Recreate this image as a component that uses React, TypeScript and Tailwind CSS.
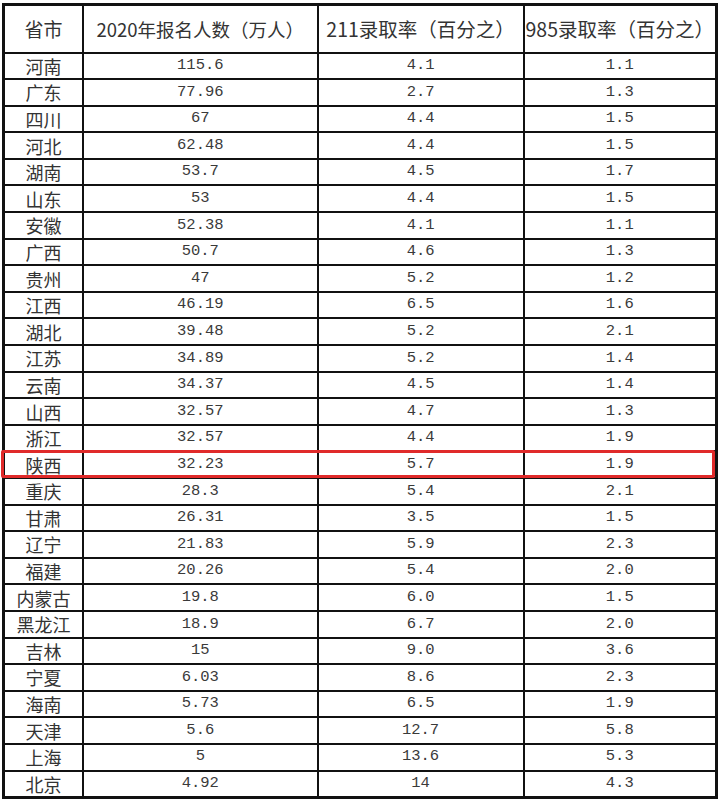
import React from "react";

const rows: [string, string, string, string][] = [
  ["河南", "115.6", "4.1", "1.1"],
  ["广东", "77.96", "2.7", "1.3"],
  ["四川", "67", "4.4", "1.5"],
  ["河北", "62.48", "4.4", "1.5"],
  ["湖南", "53.7", "4.5", "1.7"],
  ["山东", "53", "4.4", "1.5"],
  ["安徽", "52.38", "4.1", "1.1"],
  ["广西", "50.7", "4.6", "1.3"],
  ["贵州", "47", "5.2", "1.2"],
  ["江西", "46.19", "6.5", "1.6"],
  ["湖北", "39.48", "5.2", "2.1"],
  ["江苏", "34.89", "5.2", "1.4"],
  ["云南", "34.37", "4.5", "1.4"],
  ["山西", "32.57", "4.7", "1.3"],
  ["浙江", "32.57", "4.4", "1.9"],
  ["陕西", "32.23", "5.7", "1.9"],
  ["重庆", "28.3", "5.4", "2.1"],
  ["甘肃", "26.31", "3.5", "1.5"],
  ["辽宁", "21.83", "5.9", "2.3"],
  ["福建", "20.26", "5.4", "2.0"],
  ["内蒙古", "19.8", "6.0", "1.5"],
  ["黑龙江", "18.9", "6.7", "2.0"],
  ["吉林", "15", "9.0", "3.6"],
  ["宁夏", "6.03", "8.6", "2.3"],
  ["海南", "5.73", "6.5", "1.9"],
  ["天津", "5.6", "12.7", "5.8"],
  ["上海", "5", "13.6", "5.3"],
  ["北京", "4.92", "14", "4.3"],
];

const cjk = "font-['Noto_Sans_CJK_SC',sans-serif]";
const mono = "font-['Liberation_Mono','Noto_Sans_CJK_SC',monospace]";

export default function App() {
  return (
    <div className="relative w-[718px] h-[799px] overflow-hidden bg-white">
      <div className="pl-[2px] pt-[3px]">
        <table className="table-fixed border-collapse border-[3px] border-[#111] text-[#333]">
          <colgroup>
            <col className="w-[80px]" />
            <col className="w-[235px]" />
            <col className="w-[206px]" />
            <col className="w-[193px]" />
          </colgroup>
          <thead>
            <tr className="h-[48px]">
              <th className={`border-2 border-[#111] p-0 text-center align-middle font-normal leading-none text-[19px] ${cjk}`}>
                省市
              </th>
              <th className={`border-2 border-[#111] p-0 text-center align-middle font-normal leading-none text-[18.5px] whitespace-nowrap ${cjk}`}>
                2020年报名人数（万人）
              </th>
              <th className={`border-2 border-[#111] p-0 text-center align-middle font-normal leading-none text-[19.5px] whitespace-nowrap ${cjk}`}>
                211录取率（百分之）
              </th>
              <th className={`border-2 border-[#111] p-0 text-center align-middle font-normal leading-none text-[19.5px] whitespace-nowrap ${cjk}`}>
                985录取率（百分之）
              </th>
            </tr>
          </thead>
          <tbody>
            {rows.map((r) => (
              <tr key={r[0]} className="h-[26.6px]">
                <td className={`border-2 border-[#111] p-0 text-center align-middle leading-none text-[18px] ${cjk}`}>
                  {r[0]}
                </td>
                <td className={`border-2 border-[#111] p-0 text-center align-middle leading-none text-[15.5px] text-[#3a3a3a] ${mono}`}>
                  {r[1]}
                </td>
                <td className={`border-2 border-[#111] p-0 text-center align-middle leading-none text-[15.5px] text-[#3a3a3a] ${mono}`}>
                  {r[2]}
                </td>
                <td className={`border-2 border-[#111] p-0 text-center align-middle leading-none text-[15.5px] text-[#3a3a3a] ${mono}`}>
                  {r[3]}
                </td>
              </tr>
            ))}
          </tbody>
        </table>
      </div>
      <div className="absolute left-[1px] top-[450px] w-[714px] h-[28px] border-[3px] border-[#e02a2a] rounded-[2px] pointer-events-none" />
    </div>
  );
}
